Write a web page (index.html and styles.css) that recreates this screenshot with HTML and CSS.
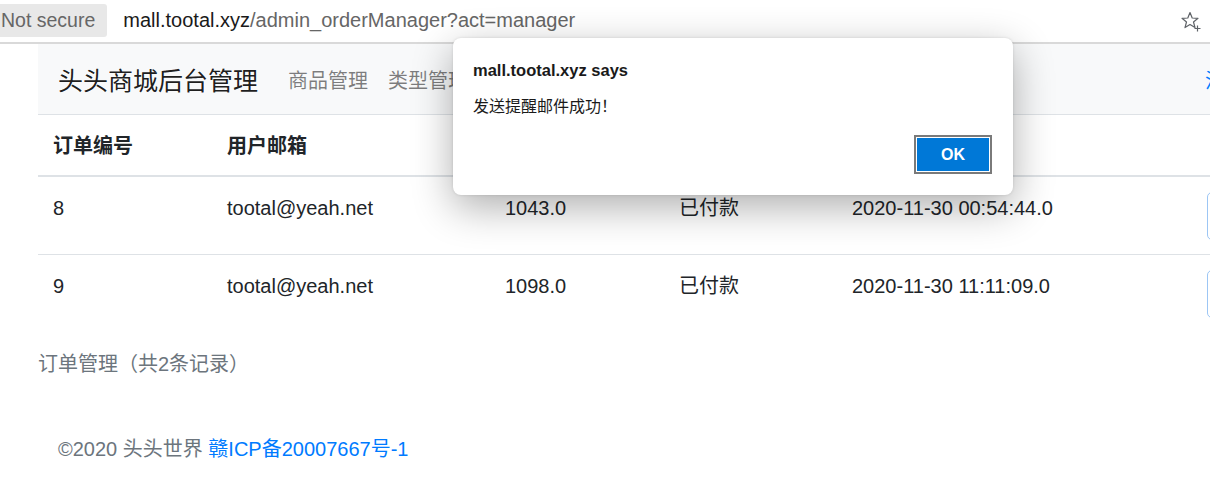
FILE: index.html
```html
<!DOCTYPE html>
<html lang="zh-CN">
<head>
<meta charset="utf-8">
<title>订单管理</title>
<link rel="stylesheet" href="styles.css">
</head>
<body>
<div class="toolbar">
  <span class="chip">Not secure</span>
  <span class="url"><span class="host">mall.tootal.xyz</span>/admin_orderManager?act=manager</span>
  <svg class="star" width="22" height="22" viewBox="0 0 22 22" aria-hidden="true">
    <path d="M10 2.5 L12.2 8 L18 8.3 L13.5 12 L15 17.6 L10 14.5 L5 17.6 L6.5 12 L2 8.3 L7.8 8 Z" fill="none" stroke="#5f6368" stroke-width="1.2" stroke-linejoin="round"/>
    <path d="M17.5 15.5 v6 M14.5 18.5 h6" stroke="#5f6368" stroke-width="1.2"/>
  </svg>
</div>

<div class="page">
  <nav class="navbar">
    <span class="brand">头头商城后台管理</span>
    <a class="nav-link">商品管理</a>
    <a class="nav-link">类型管理</a>
    <a class="nav-link right">注销</a>
  </nav>

  <table class="table">
    <caption>订单管理（共2条记录）</caption>
    <colgroup>
      <col class="c1"><col class="c2"><col class="c3"><col class="c4"><col class="c5"><col class="c6">
    </colgroup>
    <thead>
      <tr><th>订单编号</th><th>用户邮箱</th><th></th><th></th><th></th><th></th></tr>
    </thead>
    <tbody>
      <tr class="first"><td>8</td><td>tootal@yeah.net</td><td>1043.0</td><td>已付款</td><td>2020-11-30 00:54:44.0</td><td><span class="btn"></span></td></tr>
      <tr><td>9</td><td>tootal@yeah.net</td><td>1098.0</td><td>已付款</td><td>2020-11-30 11:11:09.0</td><td><span class="btn"></span></td></tr>
    </tbody>
  </table>

  <footer class="footer">©2020 头头世界 <a class="icp">赣ICP备20007667号-1</a></footer>
</div>

<div class="dialog">
  <div class="d-title">mall.tootal.xyz says</div>
  <div class="d-msg">发送提醒邮件成功！</div>
  <div class="d-actions"><span class="ok">OK</span></div>
</div>
</body>
</html>
```

FILE: styles.css
```css
html, body {
  margin: 0;
  padding: 0;
  overflow: hidden;
  background: #fff;
}
body {
  width: 1210px;
  height: 494px;
  position: relative;
  font-family: "Liberation Sans", "Noto Sans CJK SC", sans-serif;
  color: #212529;
}

.toolbar {
  display: flex;
  align-items: center;
  box-sizing: border-box;
  height: 44px;
  padding-bottom: 2px;
  border-bottom: 2px solid #d9d9d9;
}
.chip {
  background: #e8e8e8;
  color: #666;
  font-size: 19.5px;
  height: 33px;
  line-height: 33px;
  padding: 0 12px 0 1px;
  margin-top: 1px;
  border-radius: 0 3px 3px 0;
}
.url {
  margin-left: 16px;
  font-size: 20px;
  color: #666;
}
.url .host { color: #1a1a1a; }
.star { margin-left: auto; margin-right: 8px; margin-top: 2px; }

.page {
  width: 1237px;
  margin-left: 38px;
}

.navbar {
  display: flex;
  align-items: center;
  height: 70px;
  padding: 0 20px;
  background: #f8f9fa;
  box-sizing: border-box;
  white-space: nowrap;
}
.brand {
  font-size: 25px;
  color: rgba(0,0,0,.9);
  margin-right: 20px;
  line-height: 37px;
  padding-top: 4px;
}
.nav-link {
  font-size: 20px;
  color: rgba(0,0,0,.5);
  padding: 4px 10px 0;
  line-height: 30px;
}
.nav-link.right {
  margin-left: auto;
  color: #007bff;
}

.table {
  width: 1237px;
  table-layout: fixed;
  border-collapse: separate;
  border-spacing: 0;
  font-size: 20px;
  line-height: 30px;
}
.c1 { width: 174px; }
.c2 { width: 278px; }
.c3 { width: 174px; }
.c4 { width: 173px; }
.c5 { width: 355px; }
.c6 { width: 83px; }
.table th {
  text-align: left;
  font-weight: bold;
  padding: 16px 15px 14px;
  border-top: 1px solid #dee2e6;
  border-bottom: 2px solid #dee2e6;
  vertical-align: bottom;
}
.table td {
  padding: 16px 15px 14px;
  vertical-align: top;
  white-space: nowrap;
  overflow: visible;
}
.table tr.first td {
  border-bottom: 1px solid #dee2e6;
}
.btn {
  display: inline-block;
  box-sizing: border-box;
  width: 70px;
  height: 48px;
  margin-top: -1px;
  border: 1px solid #9cc6f5;
  border-radius: 5px;
  vertical-align: top;
}
caption {
  caption-side: bottom;
  text-align: left;
  color: #6c757d;
  padding: 17px 0 15px;
  font-size: 20px;
  line-height: 30px;
}

.footer {
  padding: 40px 20px 0;
  font-size: 20px;
  line-height: 30px;
  color: #6c757d;
}
.icp { color: #007bff; }

.dialog {
  position: absolute;
  left: 453px;
  top: 38px;
  width: 560px;
  height: 157px;
  box-sizing: border-box;
  background: #fff;
  border-radius: 8px;
  box-shadow: 0 12px 40px rgba(0,0,0,.32), 0 0 3px rgba(0,0,0,.12);
  padding: 20px 21px 21px 20px;
  display: flex;
  flex-direction: column;
}
.d-title {
  font-weight: bold;
  font-size: 16.5px;
  line-height: 24px;
  color: #1a1a1a;
}
.d-msg {
  margin-top: 12px;
  font-size: 16px;
  line-height: 22px;
  color: #1a1a1a;
  font-family: "Noto Sans CJK SC", sans-serif;
}
.d-actions {
  margin-top: auto;
  display: flex;
  justify-content: flex-end;
}
.ok {
  width: 78px;
  height: 39px;
  box-sizing: border-box;
  border: 2px solid #7a7a7a;
  box-shadow: inset 0 0 0 1px #fff;
  background: #0078d7;
  color: #fff;
  font-weight: bold;
  font-size: 16px;
  display: flex;
  align-items: center;
  justify-content: center;
}
```
